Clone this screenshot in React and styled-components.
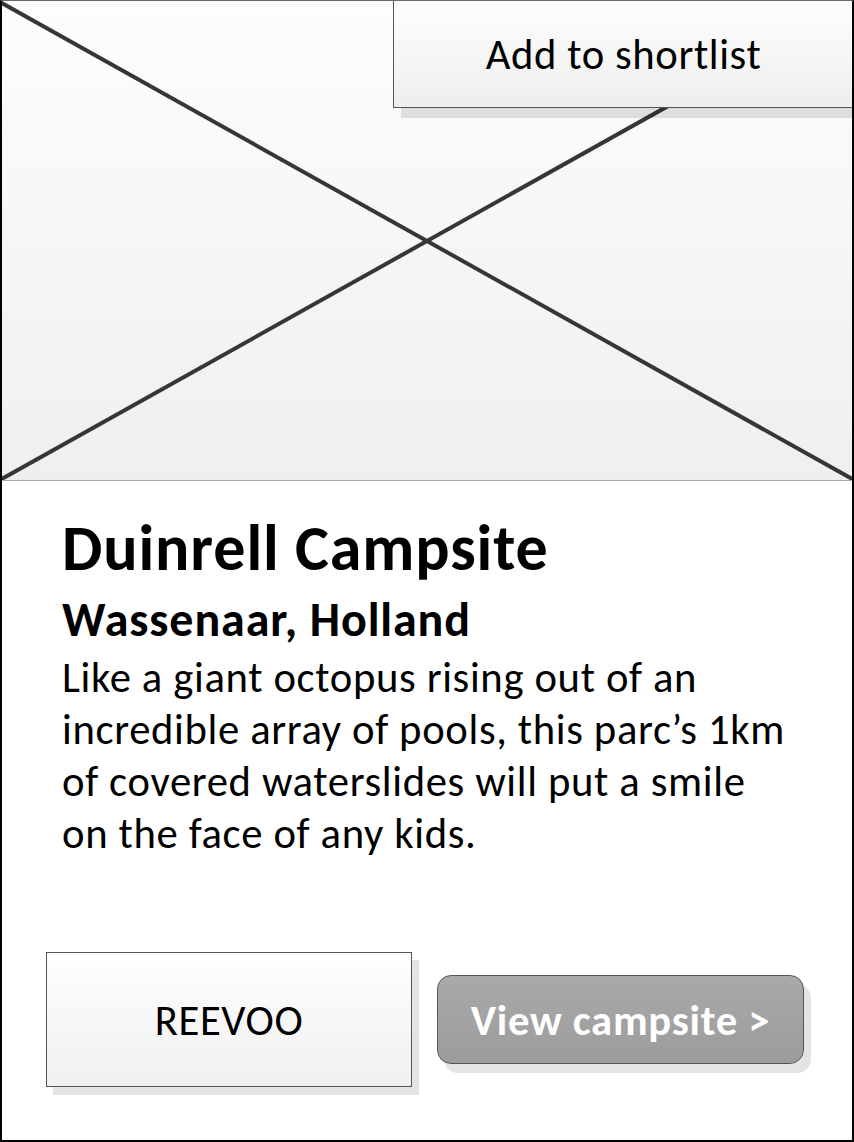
import styled, { createGlobalStyle } from "styled-components";

const Global = createGlobalStyle`
	html, body {
		margin: 0;
		padding: 0;
		background: #fff;
	}
	* {
		box-sizing: border-box;
	}
`;

export default function App() {
	return (
		<>
			<Global />
			<Card>
				<Picture>
					<Cross viewBox="0 0 854 480" preserveAspectRatio="none">
						<line x1="0" y1="1" x2="854" y2="480" />
						<line x1="0" y1="480" x2="854" y2="1" />
					</Cross>
					<ShortlistButton>Add to shortlist</ShortlistButton>
				</Picture>
				<Info>
					<Title>Duinrell Campsite</Title>
					<Place>Wassenaar, Holland</Place>
					<Blurb>
						Like a giant octopus rising out of an
						<br />
						incredible array of pools, this parc’s 1km
						<br />
						of covered waterslides will put a smile
						<br />
						on the face of any kids.
					</Blurb>
					<Actions>
						<ReevooBox>REEVOO</ReevooBox>
						<ViewButton>View campsite &gt;</ViewButton>
					</Actions>
				</Info>
			</Card>
		</>
	);
}

const font = `Carlito, Lato, "Open Sans", sans-serif`;

const Card = styled.div`
	display: flex;
	flex-direction: column;
	width: 854px;
	height: 1142px;
	border: 2px solid #000;
	border-top: 1px solid #6a6a6a;
	font-family: ${font};
	color: #000;
	overflow: hidden;
`;

const Picture = styled.div`
	position: relative;
	height: 480px;
	margin: 0 -2px;
	background: linear-gradient(#fdfdfd, #efefef);
	border-bottom: 1px solid #a8a8a8;
	flex-shrink: 0;
`;

const Cross = styled.svg`
	display: block;
	width: 100%;
	height: 100%;

	line {
		stroke: #363636;
		stroke-width: 4;
	}
`;

const ShortlistButton = styled.div`
	position: absolute;
	top: -1px;
	left: 393px;
	right: 0;
	height: 108px;
	display: flex;
	align-items: center;
	justify-content: center;
	background: linear-gradient(#fefefe, #eeeeee);
	border: 1px solid #555;
	box-shadow: 8px 10px 0 rgba(0, 0, 0, 0.11);
	font-size: 42.67px;
	letter-spacing: 0.6px;
`;

const Info = styled.div`
	flex: 1;
	display: flex;
	flex-direction: column;
	padding: 35px 0 0 60px;
`;

const Title = styled.h1`
	margin: 0;
	font-size: 64px;
	font-weight: 700;
	line-height: 64px;
	letter-spacing: 0.9px;
`;

const Place = styled.h2`
	margin: 16px 0 0;
	font-size: 48px;
	font-weight: 700;
	line-height: 48px;
	letter-spacing: 0.9px;
`;

const Blurb = styled.p`
	margin: 7px 0 0;
	font-size: 42.67px;
	line-height: 52px;
	letter-spacing: 0.65px;
`;

const Actions = styled.div`
	display: flex;
	align-items: center;
	gap: 25px;
	margin: auto 0 53px -16px;
`;

const ReevooBox = styled.div`
	display: flex;
	align-items: center;
	justify-content: center;
	width: 366px;
	height: 135px;
	background: linear-gradient(#fefefe, #f0f0f0);
	border: 1px solid #555;
	box-shadow: 7px 8px 0 #e4e4e4;
	font-size: 42.67px;
	letter-spacing: 0.6px;
`;

const ViewButton = styled.div`
	display: flex;
	align-items: center;
	justify-content: center;
	width: 367px;
	height: 89px;
	border-radius: 14px;
	background: linear-gradient(#a9a9a9, #9c9c9c);
	border: 1px solid #555;
	box-shadow: 7px 9px 0 #e4e4e4;
	color: #fff;
	font-size: 42.67px;
	font-weight: 700;
	letter-spacing: 0.73px;
`;
